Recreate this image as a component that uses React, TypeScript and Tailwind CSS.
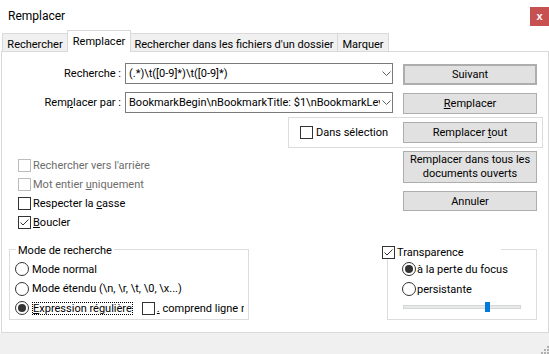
import React from "react";

const Chev = () => (
  <svg width="9" height="5" viewBox="0 0 9 5" className="shrink-0">
    <polyline points="0.5,0.5 4.5,4.5 8.5,0.5" fill="none" stroke="#5f5f5f" strokeWidth="1" />
  </svg>
);

function Combo({ text }: { text: string }) {
  return (
    <div className="w-[268px] h-[21px] border border-[#7a7a7a] bg-white flex items-center">
      <div className="flex-1 overflow-hidden whitespace-nowrap pl-[3px]">{text}</div>
      <div className="w-[12px] flex justify-center">
        <Chev />
      </div>
    </div>
  );
}

function Check({ checked = false, disabled = false }: { checked?: boolean; disabled?: boolean }) {
  return (
    <span
      className={
        disabled
          ? "w-[13px] h-[13px] border border-[#bcbcbc] bg-white flex items-center justify-center shrink-0"
          : "w-[13px] h-[13px] border border-[#333333] bg-white flex items-center justify-center shrink-0"
      }
    >
      {checked && (
        <svg width="11" height="11" viewBox="0 0 11 11">
          <polyline points="1.5,5.5 4,8 9.5,2.5" fill="none" stroke="#333333" strokeWidth="1" />
        </svg>
      )}
    </span>
  );
}

function Radio({ on = false }: { on?: boolean }) {
  return (
    <span className="w-[14px] h-[14px] rounded-full border border-[#333333] bg-white flex items-center justify-center shrink-0">
      {on && <span className="w-[8px] h-[8px] rounded-full bg-[#333333]" />}
    </span>
  );
}

function Btn({ children, className = "" }: { children: React.ReactNode; className?: string }) {
  return (
    <div
      className={
        "w-[134px] bg-[#e1e1e1] border border-[#adadad] flex items-center justify-center text-center " + className
      }
    >
      {children}
    </div>
  );
}

export default function App() {
  return (
    <div className="w-[549px] h-[354px] bg-[#f0f0f0] overflow-hidden text-[11px] leading-[15px] text-black font-['Roboto',sans-serif]">
      <div className="bg-white h-[333px] flex flex-col">
        {/* Title bar */}
        <div className="h-[30px] flex items-start justify-between">
          <span className="ml-[8px] mt-[9px] text-[12px]">Remplacer</span>
          <div className="mt-[7px] w-[19px] h-[19px] bg-[#c75050] flex items-center justify-center text-white text-[11px] leading-[11px] font-bold font-['Liberation_Sans',sans-serif]">
            x
          </div>
        </div>

        {/* Tabs */}
        <div className="h-[21px] flex items-end">
          <div className="ml-[2px] w-[65px] h-[18px] border-l border-t border-[#d9d9d9] bg-[#f0f0f0] flex justify-center pt-[3px] whitespace-nowrap">
            Rechercher
          </div>
          <div className="w-[64px] h-[22px] border-l border-t border-r border-[#d9d9d9] bg-white relative z-10 -mb-px flex justify-center pt-[3px] whitespace-nowrap">
            Remplacer
          </div>
          <div className="w-[207px] h-[18px] border-t border-r border-[#d9d9d9] bg-[#f0f0f0] flex justify-center pt-[3px] whitespace-nowrap">
            Rechercher dans les fichiers d'un dossier
          </div>
          <div className="w-[51px] h-[18px] border-t border-r border-[#d9d9d9] bg-[#f0f0f0] flex justify-center pt-[3px] whitespace-nowrap">
            Marquer
          </div>
        </div>

        {/* Panel */}
        <div className="ml-[1px] w-[548px] h-[282px] border border-[#d9d9d9] bg-white pt-[11px]">
          {/* Row 1 */}
          <div className="flex items-start h-[22px]">
            <div className="w-[119px] h-[21px] flex items-center justify-end whitespace-nowrap">Recherche :</div>
            <div className="ml-[4px]">
              <Combo text={"(.*)\\t([0-9]*)\\t([0-9]*)"} />
            </div>
            <Btn className="ml-[10px] mt-[1px] h-[21px] border-2 border-[#0078d7]">Suivant</Btn>
          </div>
          {/* Row 2 */}
          <div className="flex items-start h-[22px] mt-[7px]">
            <div className="w-[119px] h-[21px] flex items-center justify-end whitespace-nowrap">
              <span>
                Rem<u>p</u>lacer par :
              </span>
            </div>
            <div className="ml-[4px]">
              <Combo text={"BookmarkBegin\\nBookmarkTitle: $1\\nBookmarkLevel: 1\\nBookmarkPageNumber: $2"} />
            </div>
            <Btn className="ml-[10px] mt-[1px] h-[21px]">
              <span>
                <u>R</u>emplacer
              </span>
            </Btn>
          </div>
          {/* Row 3: Dans sélection */}
          <div className="mt-[3px] ml-[286px] w-[255px] h-[31px] border border-[#dcdcdc] flex items-center pl-[11px]">
            <Check />
            <span className="ml-[3px] whitespace-nowrap">Dans sélection</span>
            <Btn className="ml-auto mr-[5px] h-[21px]">
              <span>
                Remplacer <u>t</u>out
              </span>
            </Btn>
          </div>

          {/* Section B */}
          <div className="flex">
            <div className="w-[401px] pl-[16px] pt-[8px]">
              <div className="h-[19px] flex items-center">
                <Check disabled />
                <span className="ml-[2px] text-[#6d6d6d]">Rechercher vers l'arrière</span>
              </div>
              <div className="h-[19px] flex items-center">
                <Check disabled />
                <span className="ml-[2px] text-[#6d6d6d]">
                  Mot entier <u>u</u>niquement
                </span>
              </div>
              <div className="h-[19px] flex items-center">
                <Check />
                <span className="ml-[2px]">
                  Respecter la <u>c</u>asse
                </span>
              </div>
              <div className="h-[19px] flex items-center">
                <Check checked />
                <span className="ml-[2px]">
                  <u>B</u>oucler
                </span>
              </div>
            </div>
            <div className="w-[134px] pt-[3px]">
              <Btn className="h-[32px] leading-[14px]">
                <span>
                  Remplacer dans tous les
                  <br />
                  documents ouverts
                </span>
              </Btn>
              <Btn className="mt-[8px] h-[20px]">Annuler</Btn>
            </div>
          </div>

          {/* Section C */}
          <div className="flex mt-[17px]">
            <div className="ml-[7px] w-[240px] h-[71px] border border-[#dcdcdc] relative pt-[9px] pl-[5px]">
              <span className="absolute -top-[7px] left-[6px] bg-white px-[2px] whitespace-nowrap">
                Mode de recherche
              </span>
              <div className="h-[20px] flex items-center">
                <Radio />
                <span className="ml-[3px]">Mode normal</span>
              </div>
              <div className="h-[19px] flex items-center">
                <Radio />
                <span className="ml-[3px] whitespace-nowrap">{"Mode étendu (\\n, \\r, \\t, \\0, \\x...)"}</span>
              </div>
              <div className="h-[20px] flex items-center">
                <Radio on />
                <span className="ml-[3px] border border-dotted border-black leading-[11px] whitespace-nowrap">
                  <u>E</u>xpression régulière
                </span>
                <div className="ml-[9px] w-[102px] flex items-center overflow-hidden whitespace-nowrap">
                  <Check />
                  <span className="ml-[2px]">
                    <u>.</u> comprend ligne nouvelle
                  </span>
                </div>
              </div>
            </div>

            <div className="ml-[138px] w-[150px] h-[71px] border border-[#dcdcdc] relative pt-[9px] pl-[14px]">
              <div className="absolute -top-[5px] -left-[6px] w-[119px] h-[14px] bg-white flex items-center">
                <Check checked />
                <span className="ml-[2px]">Transparence</span>
              </div>
              <div className="h-[20px] flex items-center">
                <Radio on />
                <span className="ml-[1px] whitespace-nowrap">à la perte du focus</span>
              </div>
              <div className="h-[20px] flex items-center">
                <Radio />
                <span className="ml-[1px]">persistante</span>
              </div>
              <div className="mt-[3px] ml-[1px] h-[10px] flex items-center">
                <div className="relative w-[118px] h-[4px] bg-[#e7eaea] border border-[#d6d6d6]">
                  <div className="absolute left-[81px] -top-[4px] w-[5px] h-[10px] bg-[#007ad9]" />
                </div>
              </div>
            </div>
          </div>
        </div>
      </div>

      {/* bottom gray strip with grip */}
      <div className="h-[21px] flex justify-end items-end">
        <svg width="9" height="9" viewBox="0 0 9 9">
          <rect x="7" y="1" width="2" height="2" fill="#b0b0b0" />
          <rect x="4" y="4" width="2" height="2" fill="#b0b0b0" />
          <rect x="7" y="4" width="2" height="2" fill="#b0b0b0" />
          <rect x="1" y="7" width="2" height="2" fill="#b0b0b0" />
          <rect x="4" y="7" width="2" height="2" fill="#b0b0b0" />
          <rect x="7" y="7" width="2" height="2" fill="#b0b0b0" />
        </svg>
      </div>
    </div>
  );
}
